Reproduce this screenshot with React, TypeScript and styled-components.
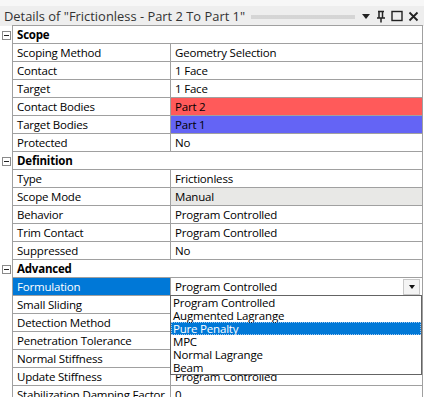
import * as React from "react";
import styled, { createGlobalStyle } from "styled-components";

const GlobalStyle = createGlobalStyle`
  html, body {
    margin: 0;
    padding: 0;
    background: #ffffff;
  }
  body {
    font-family: "Segoe UI", "Open Sans", "Noto Sans", sans-serif;
    font-size: 11.5px;
    letter-spacing: -0.2px;
    color: #000;
  }
`;

const Panel = styled.div`
  width: 424px;
  height: 397px;
  overflow: hidden;
  padding-top: 6px;
  box-sizing: border-box;
  background: linear-gradient(#f7f7f7 0, #f7f7f7 6px, #fff 6px);
`;

const TitleBar = styled.div`
  height: 20px;
  display: flex;
  align-items: center;
  gap: 6px;
  padding: 0 4px;
  background: #eeeeee;
  color: #333;
  font-size: 12.9px;
  letter-spacing: 0;
`;

const TitleText = styled.span`
  white-space: nowrap;
`;

const Grip = styled.div`
  flex: 1;
  height: 4px;
  margin-top: 1px;
  background-image: radial-gradient(circle, #b8b8b8 0.6px, transparent 0.8px);
  background-size: 2px 2px;
`;

const TitleIcons = styled.div`
  display: flex;
  align-items: center;
  gap: 5px;
  padding-right: 1px;
  svg {
    display: block;
  }
`;

const Grid = styled.div`
  display: grid;
  grid-template-columns: 12px 158px 253px;
  grid-auto-rows: 18px;
`;

const Gutter = styled.div`
  display: flex;
  align-items: center;
  justify-content: center;
  background: #fff;
`;

const Toggle = styled.div`
  width: 7px;
  height: 7px;
  border: 1px solid #8a8a8a;
  display: flex;
  align-items: center;
  justify-content: center;
  background: #fff;
  &::after {
    content: "";
    width: 5px;
    height: 1px;
    background: #222;
  }
`;

const Cell = styled.div<{ $bg?: string; $fg?: string; $span?: boolean; $bold?: boolean; $last?: boolean; $first?: boolean }>`
  position: relative;
  display: flex;
  align-items: center;
  padding-left: 4px;
  white-space: nowrap;
  box-sizing: border-box;
  border-bottom: 1px solid #a0a0a0;
  border-left: 1px solid #a0a0a0;
  ${(p) => (p.$first ? "border-top: 1px solid #a0a0a0; height: 19px; margin-top: -1px;" : "")}
  ${(p) => (p.$last ? "border-right: 1px solid #a0a0a0;" : "")}
  ${(p) => (p.$span ? "grid-column: 2 / 4;" : "")}
  background: ${(p) => p.$bg || "#fff"};
  color: ${(p) => p.$fg || "#000"};
  font-weight: ${(p) => (p.$bold ? 700 : 400)};
`;

const ComboButton = styled.div`
  position: absolute;
  right: 2px;
  top: 1px;
  width: 15px;
  height: 14px;
  border: 1px solid #c8c8c8;
  background: #f4f4f4;
  display: flex;
  align-items: center;
  justify-content: center;
  &::after {
    content: "";
    border-left: 3.5px solid transparent;
    border-right: 3.5px solid transparent;
    border-top: 4px solid #111;
  }
`;

const OptionList = styled.div`
  position: absolute;
  left: -1px;
  top: 17px;
  width: 252px;
  border: 1px solid #646464;
  background: #fff;
  z-index: 5;
  box-sizing: border-box;
`;

const Option = styled.div<{ $active?: boolean }>`
  height: 13px;
  line-height: 14px;
  padding-left: 2px;
  box-sizing: border-box;
  background: ${(p) => (p.$active ? "#0078d7" : "#fff")};
  color: ${(p) => (p.$active ? "#fff" : "#000")};
  outline: ${(p) => (p.$active ? "1px dotted #9fc8f0" : "none")};
  outline-offset: -1px;
`;

type Row =
  | { kind: "header"; label: string }
  | { kind: "prop"; label: string; value: string; bg?: string; labelBg?: string; labelFg?: string; combo?: boolean };

const rows: Row[] = [
  { kind: "header", label: "Scope" },
  { kind: "prop", label: "Scoping Method", value: "Geometry Selection" },
  { kind: "prop", label: "Contact", value: "1 Face" },
  { kind: "prop", label: "Target", value: "1 Face" },
  { kind: "prop", label: "Contact Bodies", value: "Part 2", bg: "#ff5a5a" },
  { kind: "prop", label: "Target Bodies", value: "Part 1", bg: "#6464f5" },
  { kind: "prop", label: "Protected", value: "No" },
  { kind: "header", label: "Definition" },
  { kind: "prop", label: "Type", value: "Frictionless" },
  { kind: "prop", label: "Scope Mode", value: "Manual", bg: "#e8e8e6" },
  { kind: "prop", label: "Behavior", value: "Program Controlled" },
  { kind: "prop", label: "Trim Contact", value: "Program Controlled" },
  { kind: "prop", label: "Suppressed", value: "No" },
  { kind: "header", label: "Advanced" },
  { kind: "prop", label: "Formulation", value: "Program Controlled", labelBg: "#0078d7", labelFg: "#fff", combo: true },
  { kind: "prop", label: "Small Sliding", value: "" },
  { kind: "prop", label: "Detection Method", value: "" },
  { kind: "prop", label: "Penetration Tolerance", value: "" },
  { kind: "prop", label: "Normal Stiffness", value: "" },
  { kind: "prop", label: "Update Stiffness", value: "Program Controlled" },
  { kind: "prop", label: "Stabilization Damping Factor", value: "0" },
];

const options = ["Program Controlled", "Augmented Lagrange", "Pure Penalty", "MPC", "Normal Lagrange", "Beam"];

function WindowButtons() {
  return (
    <TitleIcons>
      <svg width="10" height="8" viewBox="0 0 10 8">
        <path d="M1 2 L9 2 L5 7 Z" fill="#222" />
      </svg>
      <svg width="10" height="13" viewBox="0 0 10 13">
        <path d="M2 1.5 H8 M3 1.5 V8 M6.5 1.5 V8 M1 8 H9 M5 8 V12.5" stroke="#222" strokeWidth="1.5" fill="none" />
      </svg>
      <svg width="12" height="12" viewBox="0 0 12 12">
        <rect x="1" y="1.5" width="10" height="9" stroke="#222" strokeWidth="1.4" fill="none" />
      </svg>
      <svg width="11" height="11" viewBox="0 0 11 11">
        <path d="M1.5 1.5 L9.5 9.5 M9.5 1.5 L1.5 9.5" stroke="#222" strokeWidth="1.8" />
      </svg>
    </TitleIcons>
  );
}

export default function App() {
  return (
    <Panel>
      <GlobalStyle />
      <TitleBar>
        <TitleText>Details of "Frictionless - Part 2 To Part 1"</TitleText>
        <Grip />
        <WindowButtons />
      </TitleBar>
      <Grid>
        {rows.map((r, i) =>
          r.kind === "header" ? (
            <React.Fragment key={i}>
              <Gutter>
                <Toggle />
              </Gutter>
              <Cell $span $bold $last $first={i === 0}>
                {r.label}
              </Cell>
            </React.Fragment>
          ) : (
            <React.Fragment key={i}>
              <Gutter />
              <Cell $bg={r.labelBg} $fg={r.labelFg}>
                {r.label}
              </Cell>
              <Cell $bg={r.bg} $last>
                {r.value}
                {r.combo && (
                  <>
                    <ComboButton />
                    <OptionList>
                      {options.map((o) => (
                        <Option key={o} $active={o === "Pure Penalty"}>
                          {o}
                        </Option>
                      ))}
                    </OptionList>
                  </>
                )}
              </Cell>
            </React.Fragment>
          )
        )}
      </Grid>
    </Panel>
  );
}
